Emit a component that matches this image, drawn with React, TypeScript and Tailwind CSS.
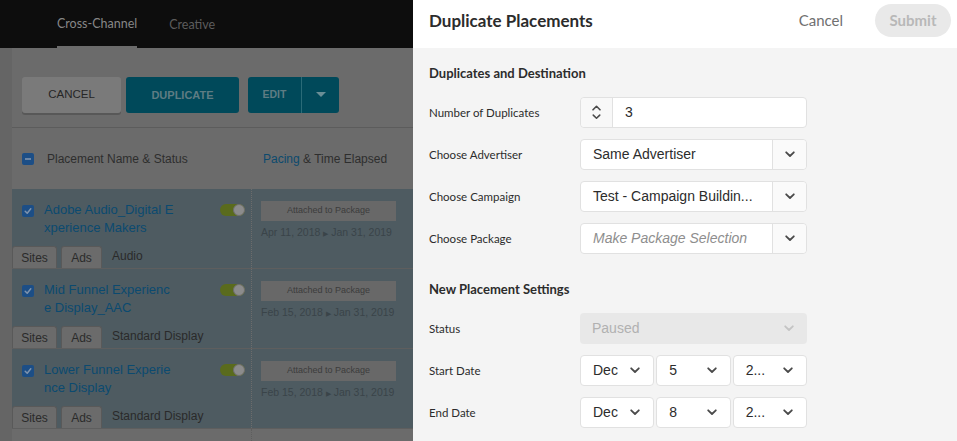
import React from "react";

const Chevron = ({ className = "" }: { className?: string }) => (
  <svg width="10" height="7" viewBox="0 0 10 7" className={className}>
    <path d="M1.2 1.3 L5 5 L8.8 1.3" fill="none" stroke="currentColor" strokeWidth="1.8" strokeLinecap="round" strokeLinejoin="round" />
  </svg>
);

const ChevronUp = () => (
  <svg width="9" height="6" viewBox="0 0 9 6">
    <path d="M1 4.8 L4.5 1.3 L8 4.8" fill="none" stroke="#4a4a4a" strokeWidth="1.6" strokeLinecap="round" strokeLinejoin="round" />
  </svg>
);

const Check = () => (
  <svg width="12" height="12" viewBox="0 0 12 12">
    <rect x="0" y="0" width="12" height="12" rx="2" fill="#1c4e86" />
    <path d="M3.2 6.2 L5.2 8.2 L8.8 3.8" fill="none" stroke="#7f93ad" strokeWidth="1.5" strokeLinecap="round" strokeLinejoin="round" />
  </svg>
);

const rows = [
  { name: ["Adobe Audio_Digital E", "xperience Makers"], kind: "Audio", from: "Apr 11, 2018" },
  { name: ["Mid Funnel Experienc", "e Display_AAC"], kind: "Standard Display", from: "Feb 15, 2018" },
  { name: ["Lower Funnel Experie", "nce Display"], kind: "Standard Display", from: "Feb 15, 2018" },
];

const SelectBox = ({ value, italic = false }: { value: string; italic?: boolean }) => (
  <div className="flex h-[31px] w-[227px] rounded-[4px] border border-[#e1e1e1] bg-white">
    <div
      className={`flex flex-1 items-center truncate pl-3 text-[14px] ${italic ? "italic text-[#8e8e8e]" : "text-[#2c2c2c]"}`}
      style={{ fontFamily: '"Liberation Sans", Arial, sans-serif' }}
    >
      {value}
    </div>
    <div className="flex w-[34px] items-center justify-center rounded-r-[4px] border-l border-[#e1e1e1] bg-[#fafafa] text-[#4a4a4a]">
      <Chevron />
    </div>
  </div>
);

const DateBox = ({ value }: { value: string }) => (
  <div
    className="flex h-[31px] items-center justify-between rounded-[4px] border border-[#e1e1e1] bg-white pl-3 pr-[13px] text-[14px] text-[#2c2c2c]"
    style={{ fontFamily: '"Liberation Sans", Arial, sans-serif' }}
  >
    <span>{value}</span>
    <Chevron className="text-[#4a4a4a]" />
  </div>
);

const FormRow = ({ label, children }: { label: string; children: React.ReactNode }) => (
  <div className="flex items-center">
    <div className="w-[151px] text-[11.5px] text-[#2c2c2c]">{label}</div>
    {children}
  </div>
);

const App = () => {
  return (
    <div className="flex h-[441px] w-[957px] overflow-hidden bg-[#6b6b6b]">
      {/* dimmed page behind the panel */}
      <div className="flex w-[413px] flex-col" style={{ fontFamily: '"Liberation Sans", Arial, sans-serif' }}>
        <div className="flex h-[48px] shrink-0 items-stretch gap-8 bg-[#0d0d0d] pl-[57px]" style={{ fontFamily: "Lato, sans-serif" }}>
          <div className="flex items-center border-b-2 border-[#6b6b6b] pt-[2px] text-[12.5px] text-[#878787]">Cross-Channel</div>
          <div className="flex items-center pt-[2px] text-[12.5px] text-[#5c5c5c]">Creative</div>
        </div>

        <div className="flex flex-1">
          <div className="w-[12px] bg-[#656565]" />
          <div className="flex flex-1 flex-col">
            <div className="flex h-[80px] items-start gap-[5px] border-b border-[#5c5c5c] pl-[10px] pt-[29px]">
              <button className="h-[36px] w-[99px] rounded-[3px] bg-[#7a7a7a] text-[11.5px] text-[#262626] shadow-[0_2px_0_#585858]">CANCEL</button>
              <button className="h-[36px] w-[113px] rounded-[3px] bg-[#00495a] text-[11px] font-bold text-[#5e7c83]">DUPLICATE</button>
              <div className="ml-[4px] flex h-[36px] w-[91px] rounded-[3px] bg-[#00495a]">
                <div className="flex w-[54px] items-center justify-center border-r border-[#2a6b78] text-[10.5px] font-bold text-[#5e7c83]">EDIT</div>
                <div className="flex flex-1 items-center justify-center">
                  <svg width="10" height="6" viewBox="0 0 10 6"><path d="M0 0 L10 0 L5 5 Z" fill="#6a8e96" /></svg>
                </div>
              </div>
            </div>

            <div className="flex h-[61px] items-center text-[12px] text-[#2e2e2e]">
              <div className="flex w-[240px] items-center pl-[10px]">
                <svg width="12" height="12" viewBox="0 0 12 12">
                  <rect width="12" height="12" rx="2" fill="#1c4e86" />
                  <rect x="3" y="5.2" width="6" height="1.6" fill="#7f93ad" />
                </svg>
                <span className="ml-[13px]">Placement Name &amp; Status</span>
              </div>
              <div className="pl-[11px]">
                <span className="text-[#0c4a6e]">Pacing</span> &amp; Time Elapsed
              </div>
            </div>

            {rows.map((r, i) => (
              <div key={i} className="flex h-[80px] border-b border-[#5e5e5e] bg-[#4e5b61]">
                <div className="flex w-[240px] flex-col border-r border-dotted border-[#6c6c6c]">
                  <div className="flex flex-1 items-start pl-[10px] pt-[12px]">
                    <div className="pt-[4px]"><Check /></div>
                    <div className="ml-[10px] flex-1 text-[13px] leading-[18px] text-[#0b4a70]">
                      <div>{r.name[0]}</div>
                      <div>{r.name[1]}</div>
                    </div>
                    <div className="mr-[6px] mt-[3px] flex h-[12px] w-[25px] items-center justify-end rounded-full bg-[#5a6b1d]">
                      <div className="h-[12px] w-[12px] rounded-full border border-[#6f6f6f] bg-[#8c8c8c]" />
                    </div>
                  </div>
                  <div className="flex h-[23px] items-end text-[12px] text-[#2a2a2a]">
                    <div className="flex h-[22px] w-[45px] items-center justify-center rounded-t-[3px] border border-b-0 border-[#595959] bg-[#6b6b6b]">Sites</div>
                    <div className="ml-[4px] flex h-[22px] w-[41px] items-center justify-center rounded-t-[3px] border border-b-0 border-[#595959] bg-[#6b6b6b]">Ads</div>
                    <div className="ml-[10px] flex h-[22px] items-center pb-[2px]">{r.kind}</div>
                  </div>
                </div>
                <div className="flex-1 pl-[9px] pt-[12px]">
                  <div className="flex h-[20px] w-[135px] items-center justify-center bg-[#686868] text-[9px] text-[#3c3c3c]">Attached to Package</div>
                  <div className="mt-[4px] text-[10.5px] text-[#3a4449]">
                    {r.from} <span className="text-[7px]">▶</span> Jan 31, 2019
                  </div>
                </div>
              </div>
            ))}
            <div className="flex flex-1">
              <div className="w-[240px] border-r border-dotted border-[#5e5e5e]" />
            </div>
          </div>
        </div>
      </div>

      {/* Duplicate Placements panel */}
      <div className="flex flex-1 flex-col bg-[#f4f4f4]" style={{ fontFamily: "Lato, sans-serif" }}>
        <div className="flex h-[48px] shrink-0 items-center bg-white pb-[7px] pl-4 pr-[6px]">
          <div className="flex-1 text-[17px] font-bold text-[#2c2c2c]">Duplicate Placements</div>
          <div className="mr-[32px] text-[15px] text-[#707070]">Cancel</div>
          <div className="flex h-[33px] w-[76px] items-center justify-center rounded-full bg-[#e9e9e9] text-[15px] font-bold text-[#b8b8b8]">Submit</div>
        </div>

        <div className="flex flex-col pl-4 pt-[17px]">
          <div className="text-[13px] font-bold leading-[16px] text-[#2c2c2c]">Duplicates and Destination</div>
          <div className="mt-[16px] flex flex-col gap-[11px]">
            <FormRow label="Number of Duplicates">
              <div className="flex h-[31px] w-[227px] rounded-[4px] border border-[#e1e1e1] bg-white">
                <div className="flex w-[32px] flex-col items-center justify-center gap-[3px] rounded-l-[4px] border-r border-[#e1e1e1] bg-[#f8f8f8]">
                  <ChevronUp />
                  <Chevron className="h-[6px] w-[9px] text-[#4a4a4a]" />
                </div>
                <div className="flex items-center pl-3 text-[14px] text-[#2c2c2c]" style={{ fontFamily: '"Liberation Sans", Arial, sans-serif' }}>3</div>
              </div>
            </FormRow>
            <FormRow label="Choose Advertiser"><SelectBox value="Same Advertiser" /></FormRow>
            <FormRow label="Choose Campaign"><SelectBox value="Test - Campaign Buildin..." /></FormRow>
            <FormRow label="Choose Package"><SelectBox value="Make Package Selection" italic /></FormRow>
          </div>

          <div className="mt-[27px] text-[13px] font-bold leading-[16px] text-[#2c2c2c]">New Placement Settings</div>
          <div className="mt-[16px] flex flex-col gap-[11px]">
            <FormRow label="Status">
              <div
                className="flex h-[31px] w-[227px] items-center justify-between rounded-[4px] bg-[#e8e8e8] pl-3 pr-[13px] text-[14px] text-[#b1b1b1]"
                style={{ fontFamily: '"Liberation Sans", Arial, sans-serif' }}
              >
                <span>Paused</span>
                <Chevron className="text-[#c4c4c4]" />
              </div>
            </FormRow>
            <FormRow label="Start Date">
              <div className="grid w-[227px] grid-cols-3 gap-[2px]">
                <DateBox value="Dec" />
                <DateBox value="5" />
                <DateBox value="2..." />
              </div>
            </FormRow>
            <FormRow label="End Date">
              <div className="grid w-[227px] grid-cols-3 gap-[2px]">
                <DateBox value="Dec" />
                <DateBox value="8" />
                <DateBox value="2..." />
              </div>
            </FormRow>
          </div>
        </div>
      </div>
    </div>
  );
};

export default App;
